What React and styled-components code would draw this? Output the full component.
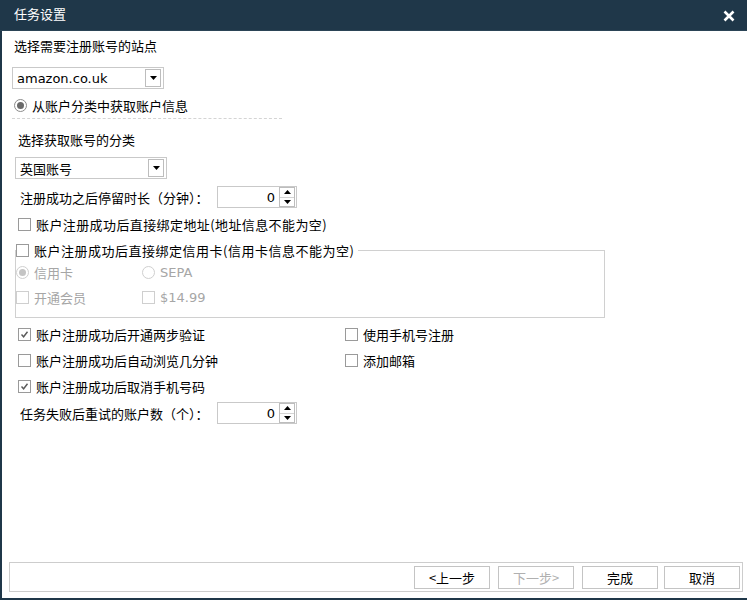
import React from 'react';
import styled, { createGlobalStyle } from 'styled-components';

const GlobalStyle = createGlobalStyle`
  html, body {
    margin: 0;
    padding: 0;
    background: #fff;
  }
  body {
    font-family: "Noto Sans CJK SC", "DejaVu Sans", sans-serif;
    font-size: 13px;
    color: #000;
  }
`;

const NAVY = '#1f3749';

const Window = styled.div`
  width: 747px;
  height: 600px;
  box-sizing: border-box;
  border-left: 2px solid ${NAVY};
  border-bottom: 2px solid ${NAVY};
  display: flex;
  flex-direction: column;
  background: #fff;
`;

const TitleBar = styled.div`
  height: 31px;
  flex: none;
  margin-left: -2px;
  background: ${NAVY};
  border-bottom: 1px solid #2b4456;
  box-sizing: border-box;
  display: flex;
  align-items: center;
  justify-content: space-between;
  padding: 0 10px 3px 14px;
  color: #fff;
  font-size: 13px;
`;

const CloseButton = styled.div`
  width: 16px;
  height: 16px;
  display: flex;
  align-items: center;
  justify-content: center;
  margin-top: 4px;
`;

const Body = styled.div`
  flex: 1;
  display: flex;
  flex-direction: column;
  padding: 4px 0 0 10px;
`;

const Line = styled.div`
  height: 20px;
  display: flex;
  align-items: center;
  margin-top: ${p => p.$mt || 0}px;
  padding-left: ${p => p.$pl || 0}px;
  letter-spacing: ${p => p.$ls || 0}px;
  color: #000;
  white-space: nowrap;
`;

const Separator = styled.div`
  width: 270px;
  margin-top: 3px;
  border-top: 1px dashed #d4d4d4;
`;

const Combo = styled.div`
  width: 152px;
  height: 22px;
  box-sizing: border-box;
  border: 1px solid #c9c9c9;
  margin-top: ${p => p.$mt}px;
  margin-left: ${p => p.$ml || 0}px;
  display: flex;
  align-items: center;
  justify-content: space-between;
  padding: 0 2px 0 4px;
  font-family: ${p => (p.$latin ? '"DejaVu Sans", sans-serif' : 'inherit')};
  font-size: 13px;
`;

const DropButton = styled.div`
  width: 14px;
  height: 16px;
  border: 1px solid #bdbdbd;
  display: flex;
  align-items: center;
  justify-content: center;
`;

const SpinRow = styled.div`
  display: flex;
  align-items: center;
  margin-top: ${p => p.$mt}px;
  padding-left: 8px;
  height: 22px;
`;

const SpinLabel = styled.span`
  width: 197px;
  white-space: nowrap;
`;

const SpinBox = styled.div`
  width: 80px;
  height: 22px;
  box-sizing: border-box;
  border: 1px solid #c9c9c9;
  display: flex;
  align-items: center;
  padding: 0 1px 0 0;
`;

const SpinValue = styled.span`
  flex: 1;
  text-align: right;
  padding-right: 4px;
  font-family: "DejaVu Sans", sans-serif;
  font-size: 13px;
`;

const SpinArrows = styled.div`
  width: 14px;
  height: 18px;
  border: 1px solid #bdbdbd;
  display: flex;
  flex-direction: column;
`;

const SpinHalf = styled.div`
  flex: 1;
  display: flex;
  align-items: center;
  justify-content: center;
  border-top: ${p => (p.$bottom ? '1px solid #d4d4d4' : 'none')};
`;

const Box = styled.span`
  width: 11px;
  height: 11px;
  flex: none;
  border: 1px solid ${p => (p.$disabled ? '#cfcfcf' : '#9a9a9a')};
  background: #fff;
  margin-right: 5px;
  display: inline-flex;
  align-items: center;
  justify-content: center;
`;

const Radio = styled.span`
  width: 11px;
  height: 11px;
  flex: none;
  border-radius: 50%;
  border: 1px solid ${p => (p.$disabled ? '#cfcfcf' : '#8c8c8c')};
  margin-right: 5px;
  display: inline-flex;
  align-items: center;
  justify-content: center;
  &::after {
    content: '';
    display: ${p => (p.$on ? 'block' : 'none')};
    width: 7px;
    height: 7px;
    border-radius: 50%;
    background: ${p => (p.$disabled ? '#c4c4c4' : '#6a6a6a')};
  }
`;

const Group = styled.fieldset`
  margin: 6px 0 0 3px;
  width: 590px;
  box-sizing: border-box;
  border: 1px solid #d0d0d0;
  padding: 2px 0 10px 0;
`;

const Legend = styled.legend`
  padding: 0 4px 0 0;
  margin-left: 0;
  height: 20px;
  display: flex;
  align-items: center;
  white-space: nowrap;
  letter-spacing: 0.5px;
`;

const GroupRow = styled.div`
  display: grid;
  grid-template-columns: 126px 1fr;
  height: 20px;
  margin-top: ${p => p.$mt || 0}px;
  color: #a6a6a6;
`;

const Item = styled.span`
  display: flex;
  align-items: center;
  font-family: ${p => (p.$latin ? '"DejaVu Sans", sans-serif' : 'inherit')};
`;

const TwoCol = styled.div`
  display: grid;
  grid-template-columns: 327px 1fr;
  height: 20px;
  margin-top: ${p => p.$mt || 0}px;
  padding-left: 6px;
`;

const Footer = styled.div`
  margin: auto 4px 6px -3px;
  height: 30px;
  box-sizing: border-box;
  border: 1px solid #cdcdcd;
  display: flex;
  align-items: center;
  justify-content: flex-end;
  padding-right: 2px;
  gap: 8px;
`;

const Button = styled.div`
  width: 76px;
  height: 23px;
  box-sizing: border-box;
  border: 1px solid #c4c4c4;
  display: flex;
  align-items: center;
  justify-content: center;
  color: ${p => (p.$disabled ? '#b0b0b0' : '#000')};
  font-size: 13px;
  margin-left: ${p => p.$ml || 0}px;
`;

const Tick = ({ color = '#5a5a5a' }) => (
  <svg width="9" height="9" viewBox="0 0 9 9">
    <path d="M1.5 4.5 L3.6 6.8 L7.5 1.8" fill="none" stroke={color} strokeWidth="1.4" />
  </svg>
);

const Down = () => (
  <svg width="7" height="4" viewBox="0 0 7 4">
    <path d="M0 0 H7 L3.5 4 Z" fill="#000" />
  </svg>
);

const Up = () => (
  <svg width="7" height="4" viewBox="0 0 7 4">
    <path d="M0 4 H7 L3.5 0 Z" fill="#000" />
  </svg>
);

const Check = ({ checked, disabled, children, latin }) => (
  <Item $latin={latin}>
    <Box $disabled={disabled}>{checked && <Tick />}</Box>
    {children}
  </Item>
);

const Spin = ({ label, value, mt }) => (
  <SpinRow $mt={mt}>
    <SpinLabel>{label}</SpinLabel>
    <SpinBox>
      <SpinValue>{value}</SpinValue>
      <SpinArrows>
        <SpinHalf><Up /></SpinHalf>
        <SpinHalf $bottom><Down /></SpinHalf>
      </SpinArrows>
    </SpinBox>
  </SpinRow>
);

const App = () => {
  return (
    <>
      <GlobalStyle />
      <Window>
        <TitleBar>
          <span>任务设置</span>
          <CloseButton>
            <svg width="12" height="12" viewBox="0 0 12 12">
              <path d="M1.5 1.5 L10.5 10.5 M10.5 1.5 L1.5 10.5" stroke="#fff" strokeWidth="2.6" />
            </svg>
          </CloseButton>
        </TitleBar>
        <Body>
          <Line $pl={2}>选择需要注册账号的站点</Line>
          <Combo $mt={12} $ml={0} $latin>
            <span>amazon.co.uk</span>
            <DropButton><Down /></DropButton>
          </Combo>
          <Line $mt={6} $pl={2}>
            <Radio $on />
            从账户分类中获取账户信息
          </Line>
          <Separator />
          <Line $mt={10} $pl={6}>选择获取账号的分类</Line>
          <Combo $mt={8} $ml={3}>
            <span>英国账号</span>
            <DropButton><Down /></DropButton>
          </Combo>
          <Spin label="注册成功之后停留时长（分钟）：" value="0" mt={7} />
          <Line $mt={6} $pl={6} $ls={0.4}>
            <Box />
            账户注册成功后直接绑定地址(地址信息不能为空)
          </Line>
          <Group>
            <Legend>
              <Box />
              账户注册成功后直接绑定信用卡(信用卡信息不能为空)
            </Legend>
            <GroupRow>
              <Item><Radio $on $disabled />信用卡</Item>
              <Item $latin><Radio $disabled />SEPA</Item>
            </GroupRow>
            <GroupRow $mt={5}>
              <Check disabled>开通会员</Check>
              <Check disabled latin>$14.99</Check>
            </GroupRow>
          </Group>
          <TwoCol $mt={6}>
            <Check checked>账户注册成功后开通两步验证</Check>
            <Check>使用手机号注册</Check>
          </TwoCol>
          <TwoCol $mt={6}>
            <Check>账户注册成功后自动浏览几分钟</Check>
            <Check>添加邮箱</Check>
          </TwoCol>
          <TwoCol $mt={6}>
            <Check checked>账户注册成功后取消手机号码</Check>
          </TwoCol>
          <Spin label="任务失败后重试的账户数（个）：" value="0" mt={6} />
          <Footer>
            <Button>&lt;上一步</Button>
            <Button $disabled>下一步&gt;</Button>
            <Button>完成</Button>
            <Button $ml={-2}>取消</Button>
          </Footer>
        </Body>
      </Window>
    </>
  );
};

export default App;
